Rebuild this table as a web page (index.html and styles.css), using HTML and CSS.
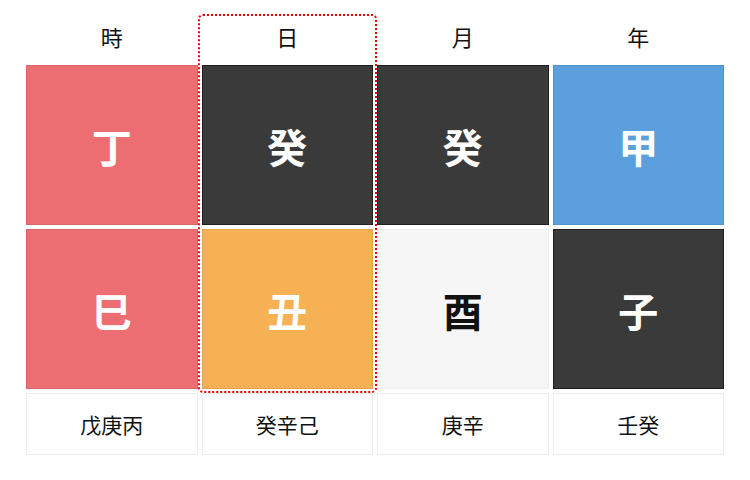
FILE: index.html
```html
<!DOCTYPE html>
<html lang="ja">
<head>
    <meta charset="UTF-8">
    <meta name="viewport" content="width=device-width, initial-scale=1.0">
    <title>四柱</title>
    <link rel="stylesheet" href="styles.css">
</head>
<body>

    <div class="pillars">
        <!-- header row -->
        <div class="pillar-head">時</div>
        <div class="pillar-head">日</div>
        <div class="pillar-head">月</div>
        <div class="pillar-head">年</div>

        <!-- heavenly stems -->
        <div class="cell stem fire">丁</div>
        <div class="cell stem water">癸</div>
        <div class="cell stem water">癸</div>
        <div class="cell stem wood">甲</div>

        <!-- earthly branches -->
        <div class="cell branch fire">巳</div>
        <div class="cell branch earth">丑</div>
        <div class="cell branch metal">酉</div>
        <div class="cell branch water">子</div>

        <!-- hidden stems -->
        <div class="hidden">戊庚丙</div>
        <div class="hidden">癸辛己</div>
        <div class="hidden">庚辛</div>
        <div class="hidden">壬癸</div>

        <!-- day pillar marker -->
        <div class="day-focus"></div>
    </div>

</body>
</html>
```

FILE: styles.css
```css
body {
    font-family: "Noto Sans CJK JP", "Noto Sans", sans-serif;
    background-color: #ffffff;
    color: #111;
    margin: 0;
    padding: 18px 0 0;
}

.pillars {
    width: 698px;
    margin: 0 auto;
    display: grid;
    grid-template-columns: repeat(4, 1fr);
    grid-template-rows: 43px 160px 160px 62px;
    gap: 4px;
}

/* every item gets its own slot so the marker can overlap */
.pillars > :nth-child(4n+1) { grid-column: 1; }
.pillars > :nth-child(4n+2) { grid-column: 2; }
.pillars > :nth-child(4n+3) { grid-column: 3; }
.pillars > :nth-child(4n+4) { grid-column: 4; }

.pillar-head {
    grid-row: 1;
    display: flex;
    align-items: center;
    justify-content: center;
    padding-bottom: 8px;
    font-size: 22px;
}

.stem { grid-row: 2; }
.branch { grid-row: 3; }

.cell {
    display: flex;
    align-items: center;
    justify-content: center;
    padding-top: 2px;
    box-sizing: border-box;
    border: 1px solid rgba(0, 0, 0, 0.08);
    font-size: 40px;
    font-weight: bold;
    color: white;
}

.fire {
    background-color: #ec6e73; /* Red */
}

.water {
    background-color: #3a3a3a; /* Dark */
    border-color: #1f1f1f;
}

.wood {
    background-color: #5ba0dc; /* Blue */
}

.earth {
    background-color: #f5b154; /* Yellow */
}

.metal {
    background-color: #f6f6f6; /* White */
    border-color: #eeeeee;
    color: #111;
}

.hidden {
    grid-row: 4;
    display: flex;
    align-items: center;
    justify-content: center;
    box-sizing: border-box;
    border: 1px solid #eeeeee;
    font-size: 21px;
}

.pillars > .day-focus {
    grid-column: 2;
    grid-row: 1 / 4;
    margin: -4px;
    border: 2px dotted #ee0000;
    border-radius: 5px;
    pointer-events: none;
}
```
